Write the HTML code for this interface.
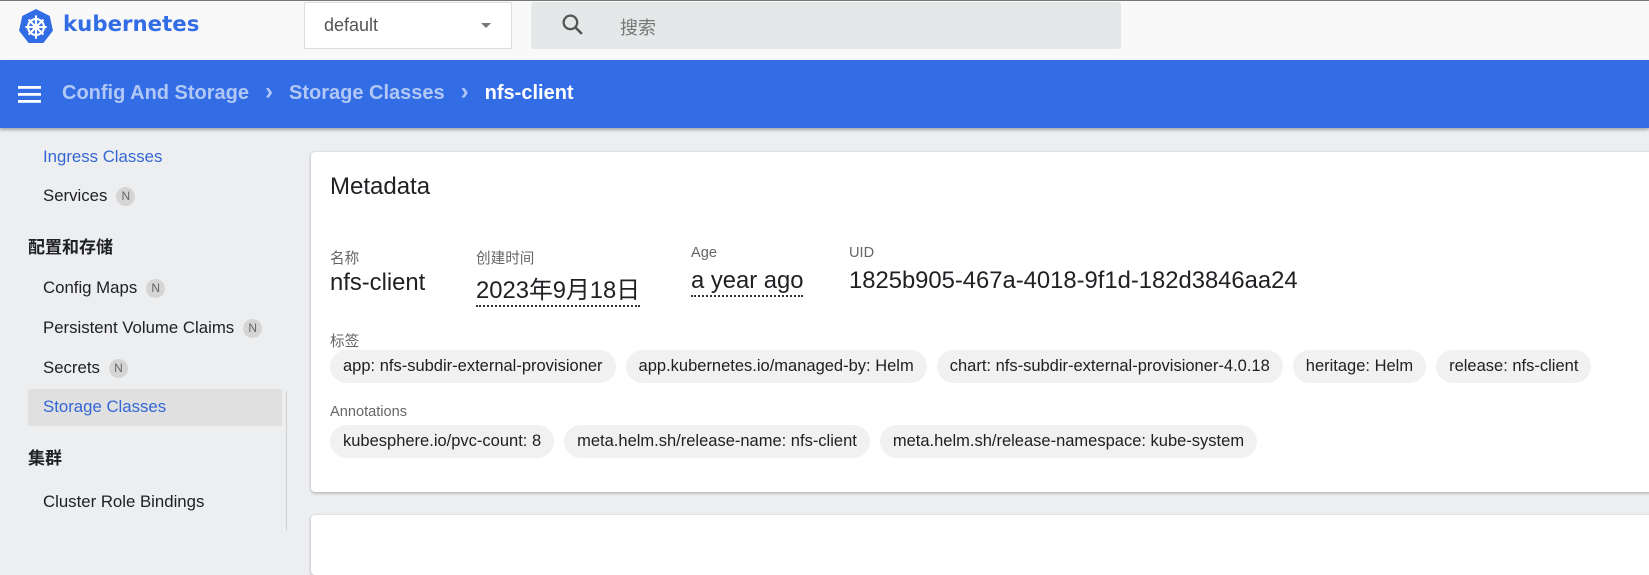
<!DOCTYPE html>
<html><head><meta charset="utf-8"><style>
*{box-sizing:border-box;margin:0;padding:0}
body{width:1649px;height:528px;overflow:hidden;background:#edeef0;font-family:"Liberation Sans","Noto Sans CJK SC",sans-serif;position:relative;color:#202124}
.abs{position:absolute;white-space:nowrap}
#top{position:absolute;left:0;top:0;width:1649px;height:60px;background:#f9f9f9;border-top:1px solid #777}
#bar{position:absolute;left:0;top:60px;width:1649px;height:68px;background:#326de6;box-shadow:0 2px 3px rgba(0,0,0,.3)}
.side{font-size:16.8px;color:#202124;line-height:20px}
.n{display:inline-block;width:19px;height:19px;border-radius:50%;background:#d5d5d5;color:#666;font-size:12px;text-align:center;line-height:19px;margin-left:9px;vertical-align:1px}
.card{position:absolute;left:311px;top:152px;width:1400px;height:340px;background:#fff;border-radius:4px;box-shadow:0 1px 3px rgba(0,0,0,.3)}
.lbl{font-size:14.6px;color:#666}
.val{font-size:23.8px;color:#202124}
.row{position:absolute;left:330px;display:flex;gap:10px}
.chip{height:33px;border-radius:17px;background:#f1f1f1;font-size:16.5px;line-height:33px;padding:0 13px;color:#202124;white-space:nowrap}
.dot{border-bottom:2px dotted #333}
</style></head><body>
<div id="top">
<svg class="abs" style="left:18px;top:7px" width="36" height="36" viewBox="0 0 34 34"><polygon points="17,1 30,7.5 33,21.5 24,33 10,33 1,21.5 4,7.5" fill="#326de6"/><g stroke="#fff" stroke-width="2" fill="none"><circle cx="17" cy="18" r="7.5"/><circle cx="17" cy="18" r="2"/><path d="M17 7v22M7 18h20M10 11l14 14M24 11L10 25"/></g></svg>
<div class="abs" style="left:63px;top:11px;font-size:21.3px;font-weight:bold;color:#326de6;font-family:'DejaVu Sans',sans-serif">kubernetes</div>
<div class="abs" style="left:304px;top:1px;width:208px;height:47px;background:#fff;border:1px solid #ddd;border-radius:2px"></div>
<div class="abs" style="left:324px;top:14px;font-size:18px;color:#555">default</div>
<div class="abs" style="left:481px;top:22px;width:0;height:0;border-left:5px solid transparent;border-right:5px solid transparent;border-top:5px solid #777"></div>
<div class="abs" style="left:531px;top:1px;width:590px;height:47px;background:#e4e8e9;border-radius:3px"></div>
<svg class="abs" style="left:560px;top:11px" width="25" height="25" viewBox="0 0 24 24"><circle cx="10" cy="10" r="6.5" stroke="#555" stroke-width="2.2" fill="none"/><path d="M15 15l6 6" stroke="#555" stroke-width="2.5"/></svg>
<div class="abs" style="left:620px;top:13px;font-size:18px;color:#777">搜索</div>
</div>
<div id="bar">
<svg class="abs" style="left:18px;top:26px" width="23" height="17"><rect y="0" width="23" height="2.8" fill="#fff"/><rect y="7" width="23" height="2.8" fill="#fff"/><rect y="14" width="23" height="2.8" fill="#fff"/></svg>
<div class="abs" style="left:62px;top:22px;font-size:20px;font-weight:bold;color:rgba(255,255,255,.62)">Config And Storage<span style="margin:0 16px 0 16px;font-size:24px;line-height:20px">&#x203A;</span>Storage Classes<span style="margin:0 16px 0 16px;font-size:24px;line-height:20px">&#x203A;</span><span style="color:#fff">nfs-client</span></div>
</div>
<div class="abs side" style="left:43px;top:147px;color:#3367d6">Ingress Classes</div>
<div class="abs side" style="left:43px;top:186px">Services<span class="n">N</span></div>
<div class="abs" style="left:28px;top:233px;font-size:17px;font-weight:bold">配置和存储</div>
<div class="abs side" style="left:43px;top:278px">Config Maps<span class="n">N</span></div>
<div class="abs side" style="left:43px;top:318px">Persistent Volume Claims<span class="n">N</span></div>
<div class="abs side" style="left:43px;top:358px">Secrets<span class="n">N</span></div>
<div class="abs" style="left:28px;top:389px;width:254px;height:37px;background:#e0e0e0;border-radius:2px"></div>
<div class="abs side" style="left:43px;top:397px;color:#3367d6">Storage Classes</div>
<div class="abs" style="left:286px;top:391px;width:1px;height:140px;background:#d0d0d0"></div>
<div class="abs" style="left:28px;top:444px;font-size:17px;font-weight:bold">集群</div>
<div class="abs side" style="left:43px;top:492px">Cluster Role Bindings</div>
<div class="card"></div>
<div class="card" style="top:515px;height:60px"></div>
<div class="abs" style="left:330px;top:173px;font-size:24px">Metadata</div>
<div class="abs lbl" style="left:330px;top:247px">名称</div>
<div class="abs val" style="left:330px;top:269px">nfs-client</div>
<div class="abs lbl" style="left:476px;top:247px">创建时间</div>
<div class="abs val dot" style="left:476px;top:270px">2023年9月18日</div>
<div class="abs lbl" style="left:691px;top:245px">Age</div>
<div class="abs val dot" style="left:691px;top:267px">a year ago</div>
<div class="abs lbl" style="left:849px;top:245px">UID</div>
<div class="abs val" style="left:849px;top:267px">1825b905-467a-4018-9f1d-182d3846aa24</div>
<div class="abs lbl" style="left:330px;top:330px">标签</div>
<div class="row" style="top:350px">
<div class="chip">app: nfs-subdir-external-provisioner</div>
<div class="chip">app.kubernetes.io/managed-by: Helm</div>
<div class="chip">chart: nfs-subdir-external-provisioner-4.0.18</div>
<div class="chip">heritage: Helm</div>
<div class="chip">release: nfs-client</div>
</div>
<div class="abs lbl" style="left:330px;top:404px">Annotations</div>
<div class="row" style="top:425px">
<div class="chip">kubesphere.io/pvc-count: 8</div>
<div class="chip">meta.helm.sh/release-name: nfs-client</div>
<div class="chip">meta.helm.sh/release-namespace: kube-system</div>
</div>
</body></html>
